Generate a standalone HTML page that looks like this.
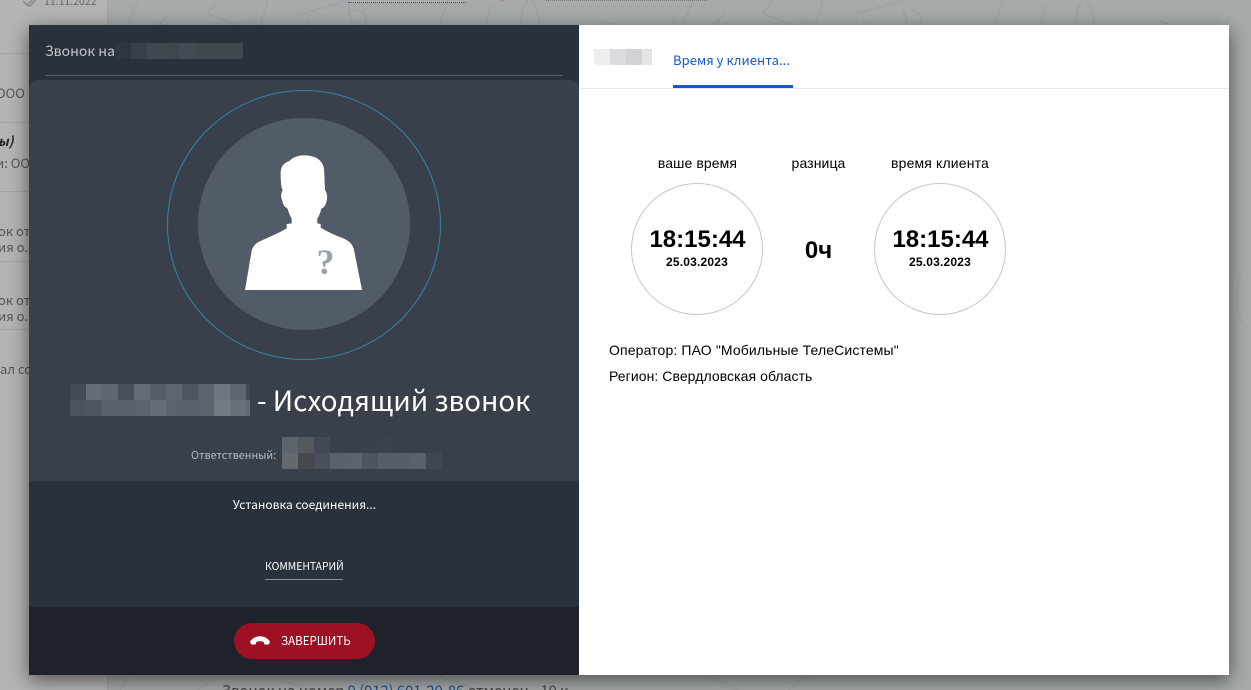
<!DOCTYPE html>
<html lang="ru"><head><meta charset="utf-8"><title>Звонок</title>
<style>
html,body{margin:0;padding:0;width:1251px;height:690px;overflow:hidden;background:#a6aaaa;font-family:"Noto Sans CJK JP","Liberation Sans",sans-serif}
body{position:relative}
.a{position:absolute;white-space:nowrap}
.c{position:absolute;display:flex}
.c i{display:block;width:16px;height:16px;flex:none}
.ar{font-family:"Liberation Sans",sans-serif;color:#000}
.ctr{text-align:center;transform:translateX(-50%)}
.s{font-size:13px;color:#555;line-height:18px}
</style></head><body>
<!-- background -->
<div class="a" style="left:0;top:0;width:107px;height:690px;background:#b4b4b4;border-right:1px solid #a2a4a4"></div>
<svg class="a" style="left:108px;top:0" width="1143" height="690" fill="none" stroke="#9ca0a0" stroke-width="1">
<g id="p"><path d="M30 0l-12 30M110 0l-10 14 50 18 10-32M142 20a6 6 0 1 0 1 0M50 24a5 5 0 1 0 1 0M62 12l-10 12M190 15l50-15M200 18l12 32 36-14-8-28M248 10a8 8 0 1 1 2 18M340 0l-10 30 44 12 8-36M420 0c-10 12-10 34 2 52 12-16 12-36 2-52M495 20l60 26 12-30"/></g>
<use href="#p" x="555"/>
<path d="M1090 95l-14 55 30 8 14-55zM1100 110a5 5 0 1 0 1 0M1095 130a5 5 0 1 0 1 0M1135 270c-8 14-8 40 0 55"/>
<path d="M20 676l-8 14M110 676l-20 14M170 678l30 12M330 676l40 14M600 676l30 14M700 676l-20 14"/>
</svg>
<div class="a" style="left:44px;top:-6px;font-size:10.500px;line-height:16px;color:#666">11.11.2022</div>
<svg class="a" style="left:22px;top:0" width="16" height="8" fill="none" stroke="#8a8a8a" stroke-width="1.5"><path d="M1 1l4 4 7-6M5 5l3 1 6-6"/></svg>
<div class="a" style="left:348px;top:2px;width:118px;height:0;border-top:1px dotted #1d5aa8"></div>
<div class="a" style="left:546px;top:0;width:161px;height:0;border-top:1px dotted #777"></div>
<div class="a" style="left:501px;top:0;width:2px;height:1px;background:#b5814a"></div>
<div class="a" style="left:0;top:53px;width:107px;height:1px;background:#a4a4a4"></div>
<div class="a s" style="left:-4px;top:84px">ООО</div>
<div class="a s" style="left:-2px;top:132px;color:#222;font-weight:700;font-style:italic">ы)</div>
<div class="a s" style="left:-4px;top:154px">и: ОО</div>
<div class="a" style="left:0;top:122px;width:107px;height:1px;background:#a4a4a4"></div>
<div class="a" style="left:0;top:191px;width:107px;height:1px;background:#a4a4a4"></div>
<div class="a s" style="left:-2px;top:222px">ок от</div>
<div class="a s" style="left:-2px;top:238px">ия о...</div>
<div class="a" style="left:0;top:261px;width:107px;height:1px;background:#a4a4a4"></div>
<div class="a s" style="left:-2px;top:291px">ок от</div>
<div class="a s" style="left:-2px;top:307px">ия о...</div>
<div class="a" style="left:0;top:329px;width:107px;height:1px;background:#a4a4a4"></div>
<div class="a s" style="left:0;top:360px">ал со</div>
<div class="a" style="left:222px;top:681px;font-size:14.700px;line-height:20px;color:#444">Звонок на номер <span style="color:#1d4f91">9 (912) 601-20-86</span> отменен - 10 к</div>

<!-- modal -->
<div class="a" style="left:29px;top:25px;width:1200px;height:650px;background:#fff;box-shadow:0 5px 18px rgba(0,0,0,.55)"></div>
<div class="a" style="left:29px;top:25px;width:550px;height:650px;background:#2a313c"></div>
<div class="a" style="left:45px;top:75px;width:518px;height:1px;background:#565b64"></div>
<div class="a" style="left:45px;top:41px;font-size:14px;line-height:20px;color:#c4c6ca">Звонок на</div>
<div class="a" style="left:115px;top:43px;width:128px;height:16px;background:linear-gradient(90deg,#30363f 0,#30363f 16px,#3a404a 16px,#3a404a 32px,#41474f 32px,#3f454e 64px,#444a53 64px,#444a53 80px,#41474f 80px)"></div>
<div class="a" style="left:29px;top:80px;width:550px;height:401px;background:#3a404b;border-radius:8px 8px 0 0"></div>
<div class="a" style="left:29px;top:607px;width:550px;height:68px;background:#1e222b"></div>

<svg class="a" style="left:160px;top:82px" width="288" height="288"><ellipse cx="144" cy="143" rx="136.500" ry="134.500" fill="none" stroke="#2e86a5" stroke-width="1"/><circle cx="144" cy="142" r="106" fill="#525c68"/></svg>
<svg class="a" style="left:230px;top:140px" width="150" height="160" viewBox="0 0 450 480">
<path fill="#fff" d="M152 105C152 84 155 72 178 63C188 52 204 46 220 46C252 46 276 56 282 85L285 150C292 160 293 172 289 186C286 197 281 203 274 206C271 220 266 230 262 236V250L272 252V263C290 274 312 285 340 295C354 301 366 310 371 325L396 450H45L65 332C70 315 80 308 92 303C120 290 148 278 170 265V252L185 250V236C180 228 176 216 172 205C165 202 160 196 158 186C152 172 152 160 158 152C153 140 152 120 152 105Z"/>
</svg>
<div class="a" style="left:316.500px;top:240px;font-family:'Liberation Serif',serif;font-weight:700;font-size:36px;line-height:44px;color:#9aa1a9">?</div>

<div class="c" style="left:70px;top:384px;width:180px;overflow:hidden">
<i style="background:#434b56"></i><i style="background:#666d77"></i><i style="background:#5f6670"></i><i style="background:#474f5a"></i><i style="background:#656c76"></i><i style="background:#565d68"></i><i style="background:#5f6670"></i><i style="background:#4f5661"></i><i style="background:#5c636d"></i><i style="background:#6f757e"></i><i style="background:#5f666f"></i><i style="background:#434a55"></i></div>
<div class="c" style="left:70px;top:400px;width:180px;overflow:hidden">
<i style="background:#4c535e"></i><i style="background:#4f5660"></i><i style="background:#5b626c"></i><i style="background:#5a616b"></i><i style="background:#5c636d"></i><i style="background:#666c76"></i><i style="background:#5c636d"></i><i style="background:#5a616b"></i><i style="background:#5c636d"></i><i style="background:#757b83"></i><i style="background:#6a7079"></i><i style="background:#626873"></i></div>
<div class="a" style="left:257px;top:379px;font-size:27.700px;line-height:40px;color:#fff">- Исходящий звонок</div>

<div class="a" style="left:191px;top:447px;font-size:10.750px;line-height:18px;color:#b9bcc1">Ответственный:</div>
<div class="c" style="left:282px;top:437px;width:160px;overflow:hidden">
<i style="background:#5c636d"></i><i style="background:#54585f"></i><i style="background:#424954"></i><i style="background:#3b414c"></i><i style="background:#3b414c"></i><i style="background:#3b414c"></i><i style="background:#3c424d"></i></div>
<div class="c" style="left:282px;top:453px;width:160px;overflow:hidden">
<i style="background:#65686d"></i><i style="background:#45484d"></i><i style="background:#49505b"></i><i style="background:#5a616b"></i><i style="background:#5c636c"></i><i style="background:#4e5560"></i><i style="background:#575e69"></i><i style="background:#575e69"></i><i style="background:#5a616b"></i><i style="background:#404752"></i></div>

<div class="a ctr" style="left:304.500px;top:495px;font-size:12px;line-height:20px;color:#fff">Установка соединения...</div>
<div class="a" style="left:265px;top:558px;width:78px;text-align:center;font-size:10.400px;line-height:16px;color:#fff">КОММЕНТАРИЙ</div>
<div class="a" style="left:265px;top:579px;width:78px;height:1px;background:#8a8e96"></div>

<div class="a" style="left:234px;top:623px;width:141px;height:36px;border-radius:18px;background:#9e1024"></div>
<svg class="a" style="left:249px;top:635px" width="22" height="12" viewBox="0 0 22 12"><path fill="#fff" d="M1 6.500C4 2.500 7.500 1.200 11 1.200S18 2.500 21 6.500L20 9.500H15.500L14.500 6.800C12.500 6 9.500 6 7.500 6.800L6.500 9.500H2Z"/></svg>
<div class="a" style="left:281px;top:632px;font-size:12px;line-height:18px;color:#fff;transform:scaleX(.96);transform-origin:0 50%">ЗАВЕРШИТЬ</div>

<!-- right -->
<div class="a" style="left:580px;top:88px;width:649px;height:1px;background:#e8e8e8"></div>
<div class="a" style="left:594px;top:49px;width:58px;height:16px;background:linear-gradient(90deg,#eeeef0 0,#eeeef0 16px,#dcdce0 16px,#dcdce0 32px,#d2d2d6 32px,#d2d2d6 48px,#e4e4e6 48px)"></div>
<div class="a" style="left:673px;top:50px;font-size:13px;line-height:20px;letter-spacing:.05px;color:#1558d0">Время у клиента...</div>
<div class="a" style="left:673px;top:85px;width:120px;height:3px;background:#1558d0"></div>

<div class="a ar ctr" style="left:697.500px;top:155px;font-size:14px;line-height:16px;letter-spacing:.1px">ваше время</div>
<div class="a ar ctr" style="left:818.500px;top:155px;font-size:14px;line-height:16px;letter-spacing:.1px">разница</div>
<div class="a ar ctr" style="left:940px;top:155px;font-size:14px;line-height:16px;letter-spacing:.15px">время клиента</div>
<div class="a" style="left:631px;top:183px;width:130px;height:130px;border:1px solid #c6c6c6;border-radius:50%"></div>
<div class="a" style="left:874px;top:183px;width:130px;height:130px;border:1px solid #c6c6c6;border-radius:50%"></div>
<div class="a ar ctr" style="left:697.500px;top:226px;font-size:24px;line-height:28px;font-weight:700">18:15:44</div>
<div class="a ar ctr" style="left:697px;top:255px;font-size:12px;line-height:14px;font-weight:700;letter-spacing:.2px">25.03.2023</div>
<div class="a ar ctr" style="left:940.500px;top:226px;font-size:24px;line-height:28px;font-weight:700">18:15:44</div>
<div class="a ar ctr" style="left:940px;top:255px;font-size:12px;line-height:14px;font-weight:700;letter-spacing:.2px">25.03.2023</div>
<div class="a ar ctr" style="left:818.500px;top:237px;font-size:24px;line-height:28px;font-weight:700">0ч</div>
<div class="a ar" style="left:609px;top:342px;font-size:14px;line-height:16px;letter-spacing:.13px">Оператор: ПАО "Мобильные ТелеСистемы"</div>
<div class="a ar" style="left:609px;top:368px;font-size:14px;line-height:16px;letter-spacing:.07px">Регион: Свердловская область</div>
</body></html>
